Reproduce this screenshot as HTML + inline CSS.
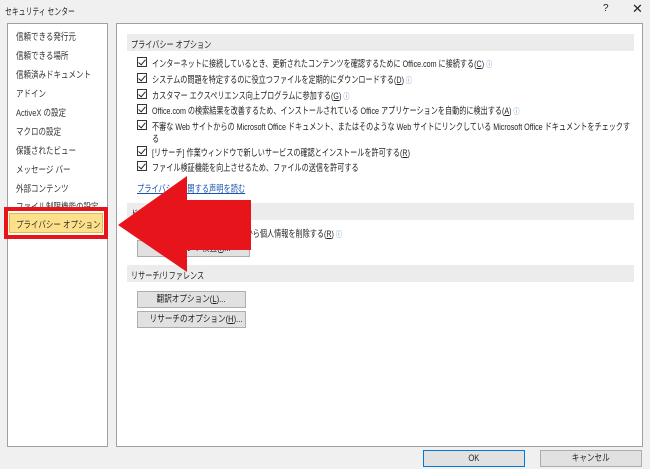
<!DOCTYPE html>
<html><head><meta charset="utf-8"><style>
*{margin:0;padding:0;box-sizing:border-box}
body{width:650px;height:469px;background:#f0f0f0;font-family:"Liberation Sans","Noto Sans CJK JP",sans-serif;font-size:9.5px;color:#222;position:relative;overflow:hidden}
.a,.li,.t,.hs{position:absolute;white-space:nowrap;transform:scaleX(.82);transform-origin:0 0}
.t,.hs{transform:scaleX(.75)}
.panel{position:absolute;background:#fff;border:1px solid #a0a0a0}
.li{left:16px;color:#333;transform:scaleX(.79)}
.hdr{position:absolute;left:127px;width:507px;height:17px;background:#ececec}
.hs{left:131px}
.cb{position:absolute;left:137px;width:10px;height:10px;border:1px solid #333;background:#fff}
.cb:after{content:"";position:absolute;left:2px;top:0px;width:3px;height:6px;border:solid #222;border-width:0 1.3px 1.3px 0;transform:rotate(40deg)}
.t{left:152px}
.i{color:#4a7fc1;font-size:8px}
.btn{position:absolute;background:#e1e1e1;border:1px solid #adadad;text-align:center;white-space:nowrap;line-height:15px}
.btn span{display:inline-block;transform:scaleX(.8)}
u{text-decoration:underline}
</style></head><body>
<div class="a" style="left:5px;top:4px;transform:scaleX(.72)">セキュリティ センター</div>
<div style="position:absolute;left:603px;top:3px;font-size:10px">?</div>
<div style="position:absolute;left:632px;top:1px;font-size:13px">✕</div>

<div class="panel" style="left:7px;top:23px;width:101px;height:424px"></div>
<div class="li" style="top:29px">信頼できる発行元</div>
<div class="li" style="top:48px">信頼できる場所</div>
<div class="li" style="top:67px">信頼済みドキュメント</div>
<div class="li" style="top:86px">アドイン</div>
<div class="li" style="top:105px">ActiveX の設定</div>
<div class="li" style="top:124px">マクロの設定</div>
<div class="li" style="top:143px">保護されたビュー</div>
<div class="li" style="top:162px">メッセージ バー</div>
<div class="li" style="top:181px">外部コンテンツ</div>
<div class="li" style="top:199px">ファイル制限機能の設定</div>
<div style="position:absolute;left:4px;top:207px;width:104px;height:32px;border:4px solid #e8141c"></div>
<div style="position:absolute;left:9px;top:213px;width:94px;height:20px;background:#fde08a;border:1px solid #e8b94a"></div>
<div class="li" style="top:217px">プライバシー オプション</div>

<div class="panel" style="left:116px;top:23px;width:527px;height:424px"></div>
<div class="hdr" style="top:34px"></div><div class="hs" style="top:37px">プライバシー オプション</div>
<div class="cb" style="top:57px"></div><div class="t" style="top:56px">インターネットに接続しているとき、更新されたコンテンツを確認するために Office.com に接続する(<u>C</u>) <span class="i">ⓘ</span></div>
<div class="cb" style="top:73px"></div><div class="t" style="top:72px">システムの問題を特定するのに役立つファイルを定期的にダウンロードする(<u>D</u>) <span class="i">ⓘ</span></div>
<div class="cb" style="top:89px"></div><div class="t" style="top:88px">カスタマー エクスペリエンス向上プログラムに参加する(<u>G</u>) <span class="i">ⓘ</span></div>
<div class="cb" style="top:104px"></div><div class="t" style="top:103px">Office.com の検索結果を改善するため、インストールされている Office アプリケーションを自動的に検出する(<u>A</u>) <span class="i">ⓘ</span></div>
<div class="cb" style="top:120px"></div><div class="t" style="top:119px">不審な Web サイトからの Microsoft Office ドキュメント、またはそのような Web サイトにリンクしている Microsoft Office ドキュメントをチェックす</div>
<div class="t" style="top:131px">る</div>
<div class="cb" style="top:146px"></div><div class="t" style="top:145px">[リサーチ] 作業ウィンドウで新しいサービスの確認とインストールを許可する(<u>R</u>)</div>
<div class="cb" style="top:161px"></div><div class="t" style="top:160px">ファイル検証機能を向上させるため、ファイルの送信を許可する</div>
<div class="a" style="left:137px;top:181px;color:#1a56b0;text-decoration:underline;transform:scaleX(.76)">プライバシーに関する声明を読む</div>

<div class="hdr" style="top:203px"></div><div class="hs" style="top:206px">ドキュメント固有の設定</div>
<div class="t" style="left:140px;top:226px">□ 保存時にファイルのプロパティから個人情報を削除する(<u>R</u>) <span class="i">ⓘ</span></div>
<div class="btn" style="left:137px;top:240px;width:113px;height:17px"><span>ドキュメント検査(<u>I</u>)...</span></div>

<div class="hdr" style="top:265px"></div><div class="hs" style="top:268px">リサーチ/リファレンス</div>
<div class="btn" style="left:137px;top:291px;width:109px;height:17px"><span>翻訳オプション(<u>L</u>)...</span></div>
<div class="btn" style="left:137px;top:311px;width:109px;height:17px"><span>リサーチのオプション(<u>H</u>)...</span></div>

<div class="btn" style="left:423px;top:450px;width:102px;height:17px;border:1px solid #0078d7"><span>OK</span></div>
<div class="btn" style="left:540px;top:450px;width:102px;height:17px"><span>キャンセル</span></div>

<svg style="position:absolute;left:0;top:0" width="650" height="469"><polygon points="118,225 187,176 187,200 251,200 251,250 187,250 187,272" fill="#e8141c"/></svg>
</body></html>
